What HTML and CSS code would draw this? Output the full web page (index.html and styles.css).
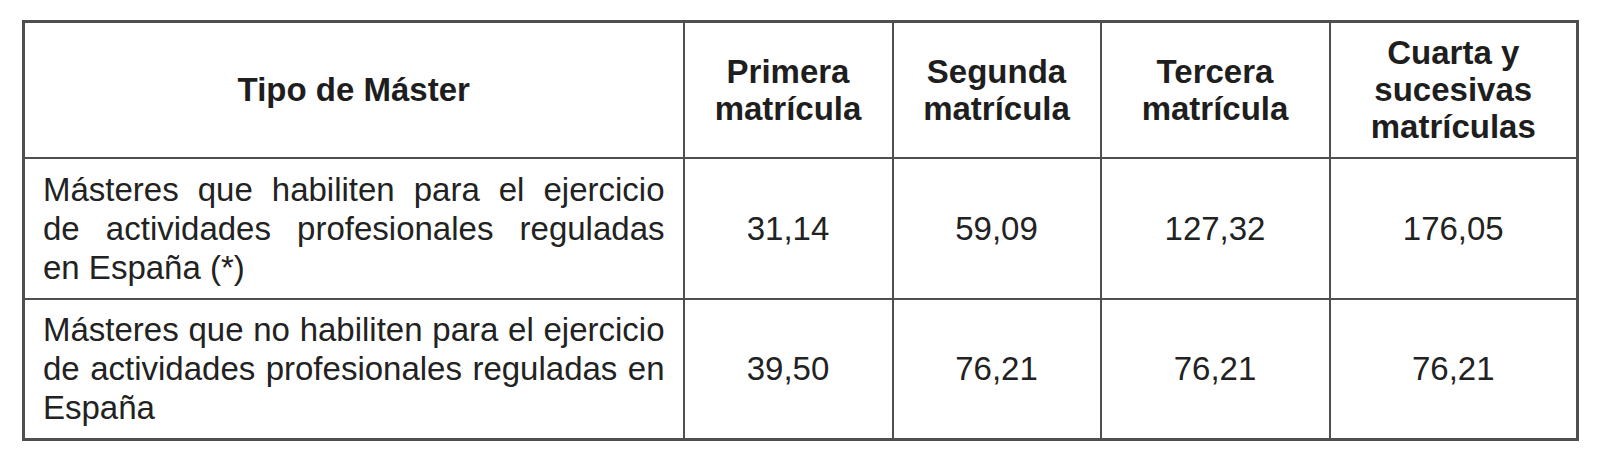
FILE: index.html
```html
<!DOCTYPE html>
<html lang="es">
<head>
<meta charset="utf-8">
<title>Precios por crédito de Máster</title>
<link rel="stylesheet" href="styles.css">
</head>
<body>
<div class="page">
  <table class="fees">
    <colgroup>
      <col class="c-type">
      <col class="c-1">
      <col class="c-2">
      <col class="c-3">
      <col class="c-4">
    </colgroup>
    <thead>
      <tr class="head-row">
        <th>Tipo de Máster</th>
        <th>Primera<br>matrícula</th>
        <th>Segunda<br>matrícula</th>
        <th>Tercera<br>matrícula</th>
        <th>Cuarta y<br>sucesivas<br>matrículas</th>
      </tr>
    </thead>
    <tbody>
      <tr class="body-row">
        <td class="type">
          <span class="jl">Másteres que habiliten para el ejercicio</span>
          <span class="jl">de actividades profesionales reguladas</span>
          <span class="ll">en España (*)</span>
        </td>
        <td class="num">31,14</td>
        <td class="num">59,09</td>
        <td class="num">127,32</td>
        <td class="num">176,05</td>
      </tr>
      <tr class="body-row">
        <td class="type">
          <span class="jl">Másteres que no habiliten para el ejercicio</span>
          <span class="jl">de actividades profesionales reguladas en</span>
          <span class="ll">España</span>
        </td>
        <td class="num">39,50</td>
        <td class="num">76,21</td>
        <td class="num">76,21</td>
        <td class="num">76,21</td>
      </tr>
    </tbody>
  </table>
</div>
</body>
</html>
```

FILE: styles.css
```css
html, body {
  margin: 0;
  padding: 0;
  background: #ffffff;
}

.page {
  padding: 20px 22px 0 22px;
  font-family: "Liberation Sans", Arial, sans-serif;
  color: #222222;
}

.fees {
  border-collapse: collapse;
  table-layout: fixed;
  width: 1554px;
  border: 3px solid #4f4f4f;
}

.c-type { width: 660px; }
.c-1 { width: 209px; }
.c-2 { width: 208px; }
.c-3 { width: 229px; }
.c-4 { width: 248px; }

.fees th,
.fees td {
  border: 2px solid #4f4f4f;
  padding: 0 18px;
  vertical-align: middle;
}

.head-row {
  height: 136px;
}

.head-row th {
  font-size: 33px;
  line-height: 37px;
  font-weight: bold;
  text-align: center;
  color: #1e1e1e;
}

.body-row {
  height: 141px;
}

.body-row td {
  font-size: 33px;
  line-height: 39px;
  font-weight: normal;
}

.type .jl {
  display: block;
  text-align: justify;
  text-align-last: justify;
}

.type .ll {
  display: block;
  text-align: left;
}

.num {
  text-align: center;
}
```
